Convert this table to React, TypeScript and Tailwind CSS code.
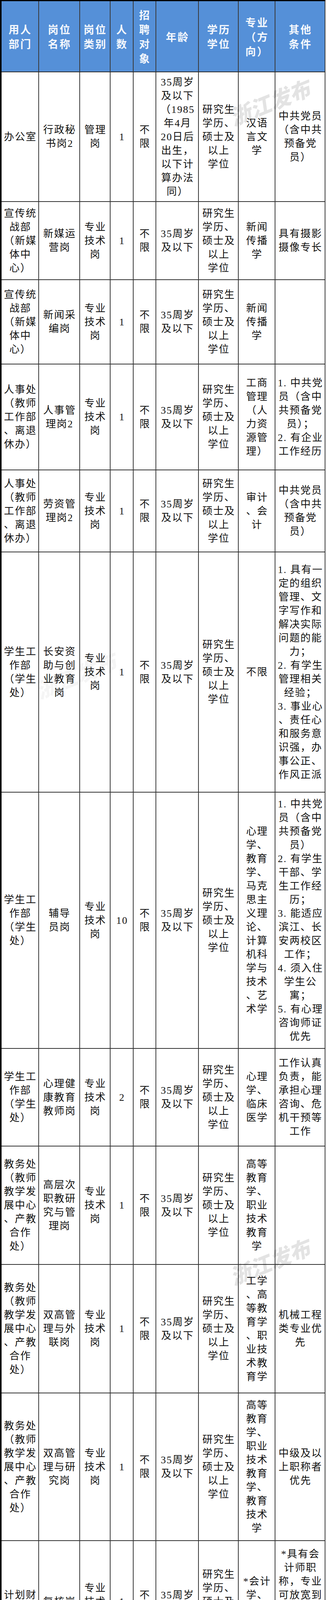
import React from "react";

type Row = { h: string; cells: string[][] };

const EDU = ["研究生", "学历、", "硕士及", "以上", "学位"];
const TECH = ["专业", "技术", "岗"];
const ANY = ["不", "限"];
const AGE = ["35周岁", "及以下"];

const XCZX = ["宣传统", "战部", "（新媒", "体中", "心）"];
const RSC = ["人事处", "（教师", "工作部", "、离退", "休办）"];
const XSC = ["学生工", "作部", "（学生", "处）"];
const JWC = ["教务处", "（教师", "教学发", "展中心", "、产教", "合作", "处）"];
const CWC = ["计划财", "务处"];
const KJ = ["*具有会", "计师职", "称，专业", "可放宽到", "税务、审", "计、金融", "等财务相", "关专业"];
const DY = ["中共党员", "（含中共", "预备党", "员）"];

const widths = [
  "w-[96px]",
  "w-[105px]",
  "w-[78px]",
  "w-[59px]",
  "w-[58px]",
  "w-[109px]",
  "w-[102px]",
  "w-[94px]",
  "w-[128px]",
];

const head = [
  ["用人", "部门"],
  ["岗位", "名称"],
  ["岗位", "类别"],
  ["人", "数"],
  ["招", "聘", "对", "象"],
  ["年龄"],
  ["学历", "学位"],
  ["专业", "（方", "向）"],
  ["其他", "条件"],
];

const rows: Row[] = [
  {
    h: "h-[332px]",
    cells: [
      ["办公室"],
      ["行政秘", "书岗2"],
      ["管理", "岗"],
      ["1"],
      ANY,
      ["35周岁", "及以下", "（1985", "年4月", "20日后", "出生，", "以下计", "算办法", "同）"],
      EDU,
      ["汉语", "言文", "学"],
      DY,
    ],
  },
  {
    h: "h-[200px]",
    cells: [XCZX, ["新媒运", "营岗"], TECH, ["1"], ANY, AGE, EDU, ["新闻", "传播", "学"], ["具有摄影", "摄像专长"]],
  },
  {
    h: "h-[216px]",
    cells: [XCZX, ["新闻采", "编岗"], TECH, ["1"], ANY, AGE, EDU, ["新闻", "传播", "学"], []],
  },
  {
    h: "h-[271px]",
    cells: [
      RSC,
      ["人事管", "理岗2"],
      TECH,
      ["1"],
      ANY,
      AGE,
      EDU,
      ["工商", "管理", "（人", "力资", "源管", "理）"],
      ["1. 中共党", "员（含中", "共预备党", "员）；", "2. 有企业", "工作经历"],
    ],
  },
  {
    h: "h-[210px]",
    cells: [RSC, ["劳资管", "理岗2"], TECH, ["1"], ANY, AGE, EDU, ["审计", "、会", "计"], DY],
  },
  {
    h: "h-[615px]",
    cells: [
      XSC,
      ["长安资", "助与创", "业教育", "岗"],
      TECH,
      ["1"],
      ANY,
      AGE,
      EDU,
      ["不限"],
      [
        "1. 具有一",
        "定的组织",
        "管理、文",
        "字写作和",
        "解决实际",
        "问题的能",
        "力；",
        "2. 有学生",
        "管理相关",
        "经验；",
        "3. 事业心",
        "、责任心",
        "和服务意",
        "识强，办",
        "事公正、",
        "作风正派",
      ],
    ],
  },
  {
    h: "h-[656px]",
    cells: [
      XSC,
      ["辅导", "员岗"],
      TECH,
      ["10"],
      ANY,
      AGE,
      EDU,
      ["心理", "学、", "教育", "学、", "马克", "思主", "义理", "论、", "计算", "机科", "学与", "技术", "、艺", "术学"],
      [
        "1. 中共党",
        "员（含中",
        "共预备党",
        "员）",
        "2. 有学生",
        "干部、学",
        "生工作经",
        "历；",
        "3. 能适应",
        "滨江、长",
        "安两校区",
        "工作；",
        "4. 须入住",
        "学生公",
        "寓；",
        "5. 有心理",
        "咨询师证",
        "优先",
      ],
    ],
  },
  {
    h: "h-[250px]",
    cells: [
      XSC,
      ["心理健", "康教育", "教师岗"],
      TECH,
      ["2"],
      ANY,
      AGE,
      EDU,
      ["心理", "学、", "临床", "医学"],
      ["工作认真", "负责，能", "承担心理", "咨询、危", "机干预等", "工作"],
    ],
  },
  {
    h: "h-[303px]",
    cells: [
      JWC,
      ["高层次", "职教研", "究与管", "理岗"],
      TECH,
      ["1"],
      ANY,
      AGE,
      EDU,
      ["高等", "教育", "学、", "职业", "技术", "教育", "学"],
      [],
    ],
  },
  {
    h: "h-[329px]",
    cells: [
      JWC,
      ["双高管", "理与外", "联岗"],
      TECH,
      ["1"],
      ANY,
      AGE,
      EDU,
      ["工学", "、高", "等教", "育学", "、职", "业技", "术教", "育学"],
      ["机械工程", "类专业优", "先"],
    ],
  },
  {
    h: "h-[378px]",
    cells: [
      JWC,
      ["双高管", "理与研", "究岗"],
      TECH,
      ["1"],
      ANY,
      AGE,
      EDU,
      ["高等", "教育", "学、", "职业", "技术", "教育", "学、", "教育", "技术", "学"],
      ["中级及以", "上职称者", "优先"],
    ],
  },
  {
    h: "h-[313px]",
    cells: [CWC, ["复核岗"], TECH, ["1"], ANY, AGE, EDU, ["*会计", "学、", "财务", "管理"], KJ],
  },
  {
    h: "h-[381px]",
    cells: [
      CWC,
      ["综合管", "理岗"],
      TECH,
      ["1"],
      ANY,
      AGE,
      EDU,
      ["会计", "学、", "财务", "管理", "、计", "算机", "科学", "与技", "术"],
      [
        "1. 财会专",
        "业有3级",
        "以上计算",
        "机等级考",
        "试证书者",
        "优先；",
        "2. 计算机",
        "专业具有",
        "会计证者",
        "优先",
      ],
    ],
  },
  {
    h: "h-[308px]",
    cells: [CWC, ["银行出", "纳岗"], TECH, ["1"], ANY, AGE, EDU, ["*会计", "学、", "财务", "管理"], KJ],
  },
  {
    h: "h-[508px]",
    cells: [
      ["资产管", "理处"],
      ["采购主", "管岗"],
      TECH,
      ["1"],
      ANY,
      AGE,
      EDU,
      ["不限"],
      [
        "1. 具备采",
        "购与招标",
        "管理相关",
        "工作经验",
        "者优先；",
        "2. 能熟练",
        "使用办公",
        "自动化软",
        "件；",
        "3. 运用计",
        "算机和新",
        "媒体能力",
        "突出者优",
        "先",
      ],
    ],
  },
];

const Cell = ({ lines, w }: { lines: string[]; w: string }) => (
  <div className={`${w} shrink-0 h-full border-r-2 border-[#3a3a3a] flex flex-col items-center justify-center`}>
    {lines.map((l, i) => (
      <div key={i} className="whitespace-nowrap pl-[2px]">
        {l}
      </div>
    ))}
  </div>
);

// semi-transparent so the table text underneath stays readable
const Watermark = ({ pos, faint }: { pos: string; faint?: boolean }) => (
  <div
    className={`absolute ${pos} -translate-x-1/2 -translate-y-1/2 rotate-[-22deg] pointer-events-none select-none whitespace-nowrap italic font-black text-[54px] leading-none font-['Noto_Sans_CJK_SC',sans-serif] ${
      faint ? "text-[rgba(0,0,0,0.04)]" : "text-[rgba(0,0,0,0.11)]"
    }`}
  >
    浙江发布
  </div>
);

export default function App() {
  return (
    <div className="w-[837px] bg-white">
      <div className="relative w-[833px] border-t-[3px] border-l-[4px] border-black">
        {/* header */}
        <div className="flex h-[182px] border-b-2 border-[#2a2a2a] bg-[#5590d8] text-[#f4f7fc] font-bold text-[27px] leading-[37px] tracking-[3px] font-['Noto_Sans_CJK_SC',sans-serif]">
          {head.map((lines, i) => (
            <Cell key={i} lines={lines} w={widths[i]} />
          ))}
        </div>

        {/* body */}
        <div className="text-[#111] text-[26px] leading-[35px] tracking-[2px] font-['Liberation_Serif','Noto_Sans_CJK_SC',serif]">
          {rows.map((r, ri) => (
            <div key={ri} className={`flex ${r.h} border-b-2 border-[#333]`}>
              {r.cells.map((lines, ci) => (
                <Cell key={ci} lines={lines} w={widths[ci]} />
              ))}
            </div>
          ))}
        </div>

        <Watermark pos="left-[686px] top-[258px]" />
        <Watermark pos="left-[190px] top-[1725px]" faint />
        <Watermark pos="left-[686px] top-[3226px]" />
        <Watermark pos="left-[140px] top-[4872px]" />
      </div>
    </div>
  );
}
